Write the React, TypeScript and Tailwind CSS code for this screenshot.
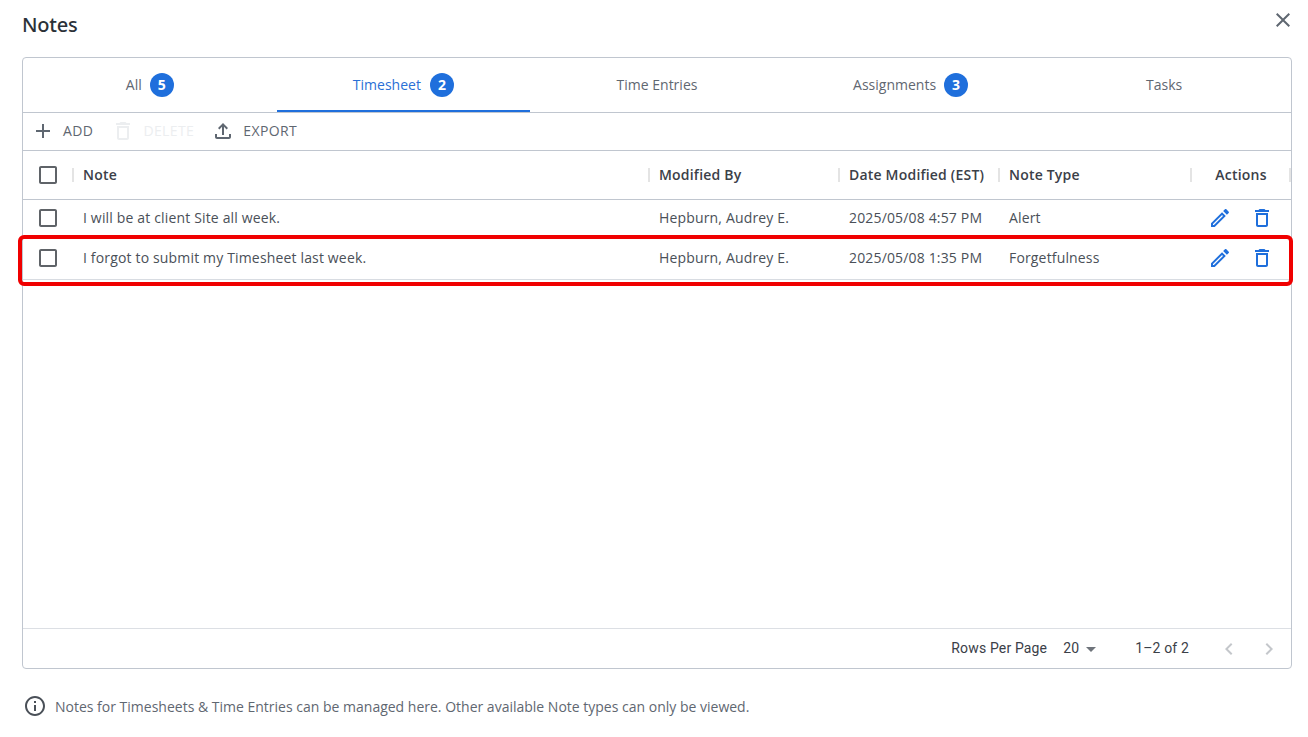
const paths = {
  add: "M19 13h-6v6h-2v-6H5v-2h6V5h2v6h6v2z",
  trash: "M6 19c0 1.1.9 2 2 2h8c1.1 0 2-.9 2-2V7H6v12zM8 9h8v10H8V9zm7.5-5l-1-1h-5l-1 1H5v2h14V4z",
  upload: "M18 15v3H6v-3H4v3c0 1.1.9 2 2 2h12c1.1 0 2-.9 2-2v-3h-2zM7 9l1.41 1.41L11 7.83V16h2V7.83l2.59 2.58L17 9l-5-5-5 5z",
  edit: "M3 17.25V21h3.75L17.81 9.94l-3.75-3.75L3 17.25zM5.92 19H5v-.92l9.06-9.06.92.92L5.92 19zM20.71 5.63l-2.34-2.34c-.39-.39-1.02-.39-1.41 0l-1.83 1.83 3.75 3.75 1.83-1.83c.39-.39.39-1.02 0-1.41z",
  info: "M11 7h2v2h-2zm0 4h2v6h-2zm1-9C6.48 2 2 6.48 2 12s4.48 10 10 10 10-4.48 10-10S17.52 2 12 2zm0 18c-4.41 0-8-3.59-8-8s3.59-8 8-8 8 3.59 8 8-3.59 8-8 8z",
  close: "M19 6.41L17.59 5 12 10.59 6.41 5 5 6.41 10.59 12 5 17.59 6.41 19 12 13.41 17.59 19 19 17.59 13.41 12z",
  checkbox: "M19 5v14H5V5h14m0-2H5c-1.1 0-2 .9-2 2v14c0 1.1.9 2 2 2h14c1.1 0 2-.9 2-2V5c0-1.1-.9-2-2-2z",
  left: "M15.41 7.41L14 6l-6 6 6 6 1.41-1.41L10.83 12z",
  right: "M10 6L8.59 7.41 13.17 12l-4.58 4.59L10 18l6-6z",
};

function Icon({ d, className }: { d: string; className: string }) {
  return (
    <svg viewBox="0 0 24 24" fill="currentColor" className={className}>
      <path d={d} />
    </svg>
  );
}

const tabs = [
  { label: "All", count: 5 },
  { label: "Timesheet", count: 2, active: true },
  { label: "Time Entries" },
  { label: "Assignments", count: 3 },
  { label: "Tasks" },
];

const rows = [
  { note: "I will be at client Site all week.", by: "Hepburn, Audrey E.", date: "2025/05/08 4:57 PM", type: "Alert", h: "h-[38px]" },
  { note: "I forgot to submit my Timesheet last week.", by: "Hepburn, Audrey E.", date: "2025/05/08 1:35 PM", type: "Forgetfulness", h: "h-[42px]" },
];

const cols = "grid grid-cols-[50px_576px_190px_160px_192px_1fr] items-center";

function HeaderCell({ label, center }: { label: string; center?: boolean }) {
  return (
    <div className={`flex items-center h-full pb-[2px] ${center ? "justify-center" : "pl-[10px]"} relative`}>
      <span className="absolute left-[-1px] top-1/2 -translate-y-1/2 h-[14px] w-[2px] bg-[#e4e4e4]" />
      <span className="text-[14px] font-[550] tracking-[0.2px] text-[#3b4048]">{label}</span>
    </div>
  );
}

export default function App() {
  return (
    <div className="relative w-[1308px] h-[737px] bg-white overflow-hidden font-['Open_Sans',sans-serif] flex flex-col px-[22px]">
      <div className="h-[57px] flex items-start justify-between shrink-0">
        <h1 className="text-[20px] leading-[27px] font-medium tracking-[-0.2px] text-[#2b3138] mt-[11px] font-['Noto_Sans',sans-serif]">Notes</h1>
        <button className="text-[#5f6771] mt-[8px] mr-[-3px] translate-x-[6px]">
          <Icon d={paths.close} className="w-[24px] h-[24px]" />
        </button>
      </div>

      <div className="h-[612px] w-[1270px] border border-[#c0c6cf] rounded-[4px] flex flex-col shrink-0">
        {/* Tabs */}
        <div className="grid grid-cols-5 h-[55px] border-b border-[#c0c6cf] shrink-0">
          {tabs.map((tab) => (
            <div
              key={tab.label}
              className={`flex items-center justify-center text-[14px] h-[54px] pt-[1px] border-b-2 ${
                tab.active ? "gap-[9px] text-[#2a6fd6] border-[#1f6fdc]" : "gap-[8px] text-[#5f6771] border-transparent"
              }`}
            >
              <span>{tab.label}</span>
              {tab.count && (
                <span className="w-[24px] h-[24px] rounded-full bg-[#1f6fdc] text-white text-[14px] font-bold flex items-center justify-center">
                  {tab.count}
                </span>
              )}
            </div>
          ))}
        </div>

        {/* Toolbar */}
        <div className="flex items-center h-[38px] pb-[2px] border-b border-[#c0c6cf] shrink-0 text-[14px] tracking-[0.4px] pl-[8px]">
          <div className="flex items-center text-[#5f6771]">
            <Icon d={paths.add} className="w-[24px] h-[24px]" />
            <span className="ml-[8px]">ADD</span>
          </div>
          <div className="flex items-center text-[#eceef0] ml-[18px]">
            <Icon d={paths.trash} className="w-[24px] h-[24px]" />
            <span className="ml-[8px]">DELETE</span>
          </div>
          <div className="flex items-center text-[#5f6771] ml-[17px]">
            <Icon d={paths.upload} className="w-[24px] h-[24px]" />
            <span className="ml-[8px]">EXPORT</span>
          </div>
        </div>

        {/* Header */}
        <div className={`${cols} h-[49px] border-b border-[#c0c6cf] shrink-0`}>
          <div className="flex pl-[13px] text-[#5f6368]">
            <Icon d={paths.checkbox} className="w-[24px] h-[24px]" />
          </div>
          <HeaderCell label="Note" />
          <HeaderCell label="Modified By" />
          <HeaderCell label="Date Modified (EST)" />
          <HeaderCell label="Note Type" />
          <div className="relative h-full">
            <HeaderCell label="Actions" center />
            <span className="absolute right-0 top-1/2 -translate-y-1/2 h-[14px] w-[2px] bg-[#e4e4e4]" />
          </div>
        </div>

        {/* Rows */}
        {rows.map((row) => (
          <div key={row.note} className={`${cols} ${row.h} pb-[2px] border-b border-[#d8dce2] shrink-0 text-[14px] tracking-[0.16px] text-[#4a5058] last:border-[#c9ccd1]`}>
            <div className="flex pl-[13px] text-[#5f6368]">
              <Icon d={paths.checkbox} className="w-[24px] h-[24px]" />
            </div>
            <div className="pl-[10px]">{row.note}</div>
            <div className="pl-[10px]">{row.by}</div>
            <div className="pl-[10px]">{row.date}</div>
            <div className="pl-[10px]">{row.type}</div>
            <div className="flex items-center pl-[17px] gap-[18px] text-[#1f6fdc]">
              <Icon d={paths.edit} className="w-[24px] h-[24px]" />
              <Icon d={paths.trash} className="w-[24px] h-[24px]" />
            </div>
          </div>
        ))}

        <div className="flex-1" />

        {/* Pagination */}
        <div className="h-[40px] border-t border-[#dcdfe4] flex items-center justify-end shrink-0 font-['Roboto',sans-serif] text-[14px] tracking-[0.15px] text-[#3b4048]">
          <span>Rows Per Page</span>
          <span className="ml-[16px]">20</span>
          <svg viewBox="0 0 24 24" fill="currentColor" className="w-[24px] h-[24px] text-[#6f747b]">
            <path d="M7 10l5 5 5-5z" />
          </svg>
          <span className="ml-[32px] mr-[4px]">1–2 of 2</span>
          <div className="flex items-center ml-[24px] gap-[16px] mr-[10px] text-[#c4c7cb]">
            <Icon d={paths.left} className="w-[24px] h-[24px]" />
            <Icon d={paths.right} className="w-[24px] h-[24px]" />
          </div>
        </div>
      </div>

      {/* Info */}
      <div className="flex items-center mt-[25px] text-[14px] text-[#5f6771] pl-[1px]">
        <Icon d={paths.info} className="w-[24px] h-[24px] text-[#4a5058]" />
        <span className="ml-[8px]">
          Notes for Timesheets &amp; Time Entries can be managed here. Other available Note types can only be viewed.
        </span>
      </div>

      {/* Highlight annotation */}
      <div className="absolute left-[18px] top-[235px] w-[1275px] h-[51px] border-[4px] border-[#f00000] rounded-[6px] pointer-events-none" />
    </div>
  );
}
